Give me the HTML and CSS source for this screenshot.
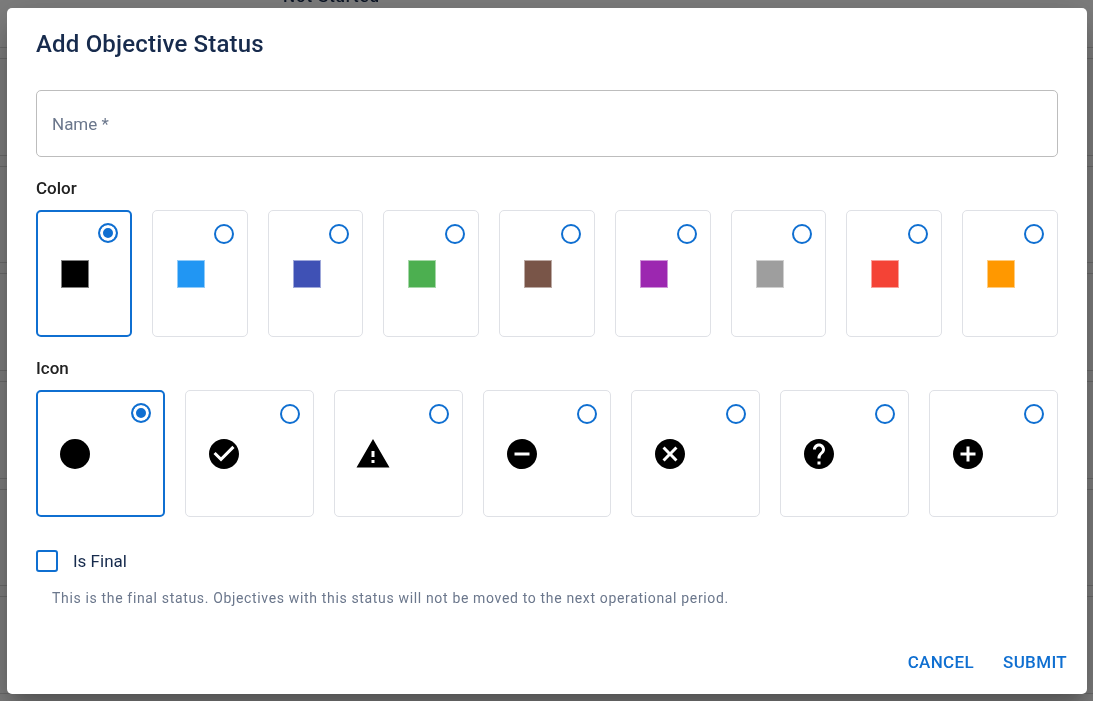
FILE: index.html
```html
<!DOCTYPE html>
<html lang="en">
    <head>
        <meta charset="utf-8" />
        <title>Add Objective Status</title>
        <link rel="stylesheet" href="styles.css">
    </head>
    <body>
        <div class="board">
            <div class="row first">Not Started</div>
            <div class="row"></div>
            <div class="row"></div>
            <div class="row"></div>
            <div class="row"></div>
            <div class="row"></div>
            <div class="row"></div>
        </div>

        <div class="overlay">
            <form class="dialog" role="dialog" aria-labelledby="dialog-title">
                <h2 id="dialog-title" class="title">Add Objective Status</h2>

                <div class="content">
                    <div class="field">
                        <input id="name" class="field-input" type="text" placeholder=" " required>
                        <label for="name" class="field-label">Name *</label>
                    </div>

                    <fieldset class="group">
                        <legend>Color</legend>
                        <div class="options">
                            <label class="option"><input type="radio" name="color" aria-label="Black" checked><span class="swatch black"></span></label>
                            <label class="option"><input type="radio" name="color" aria-label="Blue"><span class="swatch blue"></span></label>
                            <label class="option"><input type="radio" name="color" aria-label="Indigo"><span class="swatch indigo"></span></label>
                            <label class="option"><input type="radio" name="color" aria-label="Green"><span class="swatch green"></span></label>
                            <label class="option"><input type="radio" name="color" aria-label="Brown"><span class="swatch brown"></span></label>
                            <label class="option"><input type="radio" name="color" aria-label="Purple"><span class="swatch purple"></span></label>
                            <label class="option"><input type="radio" name="color" aria-label="Gray"><span class="swatch gray"></span></label>
                            <label class="option"><input type="radio" name="color" aria-label="Red"><span class="swatch red"></span></label>
                            <label class="option"><input type="radio" name="color" aria-label="Orange"><span class="swatch orange"></span></label>
                        </div>
                    </fieldset>

                    <fieldset class="group">
                        <legend>Icon</legend>
                        <div class="options">
                            <label class="option">
                                <input type="radio" name="icon" aria-label="Circle" checked>
                                <svg class="icon" viewBox="0 0 24 24"><circle cx="12" cy="12" r="10"/></svg>
                            </label>
                            <label class="option">
                                <input type="radio" name="icon" aria-label="Check">
                                <svg class="icon" viewBox="0 0 24 24"><path d="M12 2C6.48 2 2 6.48 2 12s4.48 10 10 10 10-4.48 10-10S17.52 2 12 2zm-2 15l-5-5 1.41-1.41L10 14.17l7.59-7.59L19 8l-9 9z"/></svg>
                            </label>
                            <label class="option">
                                <input type="radio" name="icon" aria-label="Warning">
                                <svg class="icon" viewBox="0 0 24 24"><path d="M1 21h22L12 2 1 21zm12-3h-2v-2h2v2zm0-4h-2v-4h2v4z"/></svg>
                            </label>
                            <label class="option">
                                <input type="radio" name="icon" aria-label="Minus">
                                <svg class="icon" viewBox="0 0 24 24"><path d="M12 2C6.48 2 2 6.48 2 12s4.48 10 10 10 10-4.48 10-10S17.52 2 12 2zm5 11H7v-2h10v2z"/></svg>
                            </label>
                            <label class="option">
                                <input type="radio" name="icon" aria-label="Cancel">
                                <svg class="icon" viewBox="0 0 24 24"><path d="M12 2C6.47 2 2 6.47 2 12s4.47 10 10 10 10-4.47 10-10S17.53 2 12 2zm5 13.59L15.59 17 12 13.41 8.41 17 7 15.59 10.59 12 7 8.41 8.41 7 12 10.59 15.59 7 17 8.41 13.41 12 17 15.59z"/></svg>
                            </label>
                            <label class="option">
                                <input type="radio" name="icon" aria-label="Question">
                                <svg class="icon" viewBox="0 0 24 24"><path d="M12 2C6.48 2 2 6.48 2 12s4.48 10 10 10 10-4.48 10-10S17.52 2 12 2zm1 17h-2v-2h2v2zm2.07-7.75l-.9.92C13.45 12.9 13 13.5 13 15h-2v-.5c0-1.1.45-2.1 1.17-2.83l1.24-1.26c.37-.36.59-.86.59-1.41 0-1.1-.9-2-2-2s-2 .9-2 2H8c0-2.21 1.79-4 4-4s4 1.79 4 4c0 .88-.36 1.68-.93 2.25z"/></svg>
                            </label>
                            <label class="option">
                                <input type="radio" name="icon" aria-label="Plus">
                                <svg class="icon" viewBox="0 0 24 24"><path d="M12 2C6.48 2 2 6.48 2 12s4.48 10 10 10 10-4.48 10-10S17.52 2 12 2zm5 11h-4v4h-2v-4H7v-2h4V7h2v4h4v2z"/></svg>
                            </label>
                        </div>
                    </fieldset>

                    <div class="final">
                        <input id="final" type="checkbox" aria-describedby="final-help">
                        <label for="final">Is Final</label>
                    </div>
                    <p id="final-help" class="help">This is the final status. Objectives with this status will not be moved to the next operational period.</p>
                </div>

                <div class="actions">
                    <button type="button">CANCEL</button>
                    <button type="submit">SUBMIT</button>
                </div>
            </form>
        </div>
    </body>
</html>
```

FILE: styles.css
```css
* {
    box-sizing: border-box;
}

body {
    margin: 0;
    font-family: Roboto, sans-serif;
    font-size: 17px;
    line-height: 24px;
    color: #172b4d;
    background: #fafafa;
}

/* page behind the dialog */
.board {
    position: fixed;
    inset: 0;
    display: grid;
    grid-template-rows: 48px repeat(6, 1fr);
    gap: 10px;
    padding-bottom: 7px;
}

.row {
    border: solid #d4d4d4;
    border-width: 1px 0;
}

.first {
    border-top: 0;
    padding-left: 283px;
    margin-top: -16px;
    font-weight: 500;
    letter-spacing: .05em;
}

.overlay {
    position: relative;
    min-height: 100vh;
    padding: 8px 6px 7px 7px;
    background: rgba(0, 0, 0, .5);
}

.dialog {
    padding: 20px 0 14px;
    background: #fff;
    border-radius: 5px;
    box-shadow: 0 11px 15px -7px rgba(0, 0, 0, .2), 0 24px 38px 3px rgba(0, 0, 0, .14), 0 9px 46px 8px rgba(0, 0, 0, .12);
}

.title {
    margin: 0 29px 30px;
    font-size: 24px;
    font-weight: 500;
    line-height: 32px;
    letter-spacing: .0075em;
}

.content {
    padding: 0 29px;
}

.field {
    position: relative;
}

.field-input {
    display: block;
    width: 100%;
    height: 67px;
    padding: 0 16px;
    border: 1px solid #bdbdbd;
    border-radius: 5px;
    font: inherit;
    color: inherit;
    background: none;
}

.field-label {
    position: absolute;
    top: 22px;
    left: 16px;
    color: #6b778c;
    pointer-events: none;
}

.field-input:focus + .field-label,
.field-input:not(:placeholder-shown) + .field-label {
    top: -12px;
    padding: 0 4px;
    font-size: 14px;
    background: #fff;
}

.group {
    min-width: 0;
    margin: 19px 0 0;
    padding: 0;
    border: 0;
}

.group legend {
    padding: 0;
    font-weight: 500;
    color: #212121;
}

.options {
    display: grid;
    grid-auto-flow: column;
    grid-auto-columns: 1fr;
    gap: 20px;
    margin-top: 10px;
}

.option {
    display: flex;
    flex-direction: column;
    height: 127px;
    padding: 13px;
    border: 1px solid #dfe1e6;
    border-radius: 5px;
    cursor: pointer;
}

.option:has(:checked) {
    padding: 11px 12px 12px;
    border: 2px solid #0f6fd1;
}

.option input {
    appearance: none;
    align-self: flex-end;
    width: 20px;
    height: 20px;
    margin: 0;
    border: 2px solid #0f6fd1;
    border-radius: 50%;
}

.option input:checked {
    margin-bottom: 1px;
    background: #0f6fd1;
    box-shadow: inset 0 0 0 3px #fff;
}

.swatch {
    width: 28px;
    height: 28px;
    margin: 16px 0 0 11px;
    border: 1px solid rgba(255, 255, 255, .5);
}

.black { background: #000; }
.blue { background: #2196f3; }
.indigo { background: #3f51b5; }
.green { background: #4caf50; }
.brown { background: #795548; }
.purple { background: #9c27b0; }
.gray { background: #9e9e9e; }
.red { background: #f44336; }
.orange { background: #ff9800; }

.icon {
    width: 36px;
    height: 36px;
    margin: 12px 0 0 7px;
    fill: #000;
}

.final {
    display: flex;
    align-items: center;
    gap: 15px;
    margin-top: 32px;
}

.final input {
    appearance: none;
    width: 22px;
    height: 22px;
    margin: 0;
    border: 2px solid #0f6fd1;
    border-radius: 3px;
}

.final input:checked {
    background: #0f6fd1;
}

.help {
    margin: 13px 16px 0;
    font-size: 14px;
    letter-spacing: .047em;
    color: #6b778c;
}

.actions {
    display: flex;
    justify-content: flex-end;
    gap: 9px;
    padding: 34px 10px 0;
}

.actions button {
    height: 36px;
    padding: 0 10px;
    border: 0;
    border-radius: 5px;
    font: inherit;
    font-weight: 500;
    letter-spacing: .02em;
    color: #0f6fd1;
    background: none;
    cursor: pointer;
}
```
